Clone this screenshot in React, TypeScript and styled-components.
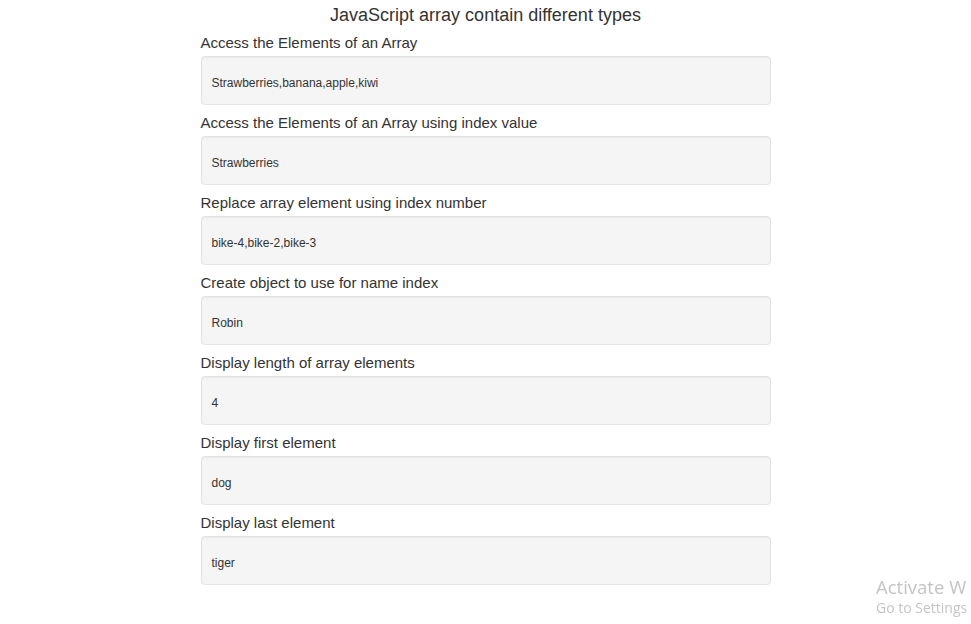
import React from "react";
import styled, { createGlobalStyle } from "styled-components";

const GlobalStyle = createGlobalStyle`
  html, body {
    margin: 0;
    padding: 0;
    background: #fff;
    font-family: "Liberation Sans", Arial, sans-serif;
    color: #333;
  }
`;

const Page = styled.div`
  width: 570px;
  margin: 0 auto;
  padding-top: 4px;
`;

const Title = styled.h3`
  margin: 0 0 7px;
  font-size: 18px;
  font-weight: normal;
  line-height: 22px;
  text-align: center;
`;

const Section = styled.div`
  margin-bottom: 8px;
`;

const Label = styled.div`
  font-size: 15px;
  line-height: 20px;
  margin-bottom: 3px;
`;

const Well = styled.div`
  box-sizing: border-box;
  height: 49px;
  padding: 4px 10px 0;
  display: flex;
  align-items: center;
  font-size: 12px;
  background: #f5f5f5;
  border: 1px solid #e3e3e3;
  border-radius: 4px;
  box-shadow: inset 0 1px 1px rgba(0, 0, 0, 0.05);
`;

// windows activation watermark, sits over the page corner
const Watermark = styled.div`
  position: fixed;
  left: 876px;
  top: 575px;
  white-space: nowrap;
  font-family: "Open Sans", "DejaVu Sans", sans-serif;
  color: #c4c4c4;
`;

const WatermarkBig = styled.div`
  font-size: 18.5px;
  line-height: 23px;
`;

const WatermarkSmall = styled.div`
  font-size: 14px;
  line-height: 20px;
`;

const rows = [
  { label: "Access the Elements of an Array", value: "Strawberries,banana,apple,kiwi" },
  { label: "Access the Elements of an Array using index value", value: "Strawberries" },
  { label: "Replace array element using index number", value: "bike-4,bike-2,bike-3" },
  { label: "Create object to use for name index", value: "Robin" },
  { label: "Display length of array elements", value: "4" },
  { label: "Display first element", value: "dog" },
  { label: "Display last element", value: "tiger" },
];

export default function App() {
  return (
    <>
      <GlobalStyle />
      <Page>
        <Title>JavaScript array contain different types</Title>
        {rows.map((r) => (
          <Section key={r.label}>
            <Label>{r.label}</Label>
            <Well>{r.value}</Well>
          </Section>
        ))}
      </Page>
      <Watermark>
        <WatermarkBig>Activate W</WatermarkBig>
        <WatermarkSmall>Go to Settings</WatermarkSmall>
      </Watermark>
    </>
  );
}
